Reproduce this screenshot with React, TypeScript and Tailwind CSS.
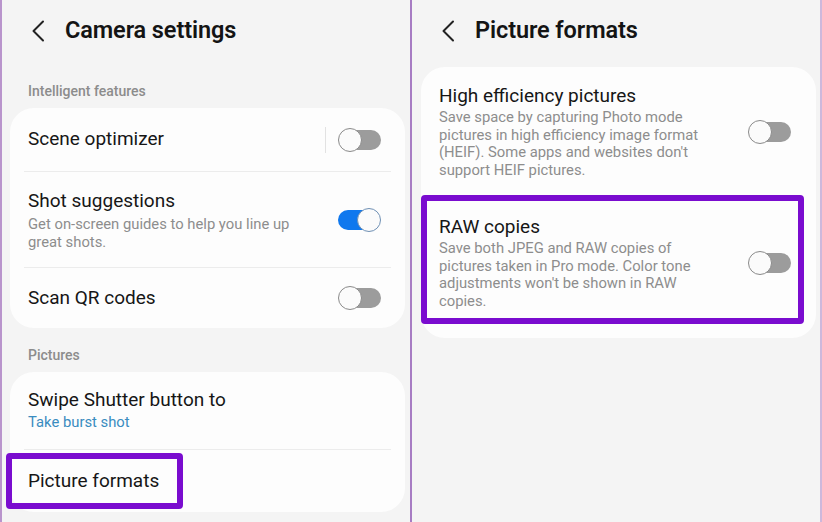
import React from "react";

function Chevron() {
  return (
    <svg width="14" height="22" viewBox="0 0 14 22" fill="none">
      <path d="M12 1.5 L2.5 11 L12 20.5" stroke="#222" strokeWidth="2" strokeLinecap="round" strokeLinejoin="round" />
    </svg>
  );
}

function Toggle({ on }: { on?: boolean }) {
  if (on) {
    return (
      <div className="relative w-[43px] h-[24px] shrink-0">
        <div className="absolute left-0 right-[2px] top-[2px] h-[20px] rounded-full bg-[#0f78ee]" />
        <div className="absolute right-0 top-0 w-[24px] h-[24px] rounded-full bg-[#fbfbfb] border-[1.5px] border-[#6f90b4]" />
      </div>
    );
  }
  return (
    <div className="relative w-[43px] h-[24px] shrink-0">
      <div className="absolute left-[2px] right-0 top-[2px] h-[20px] rounded-full bg-[#9c9c9c]" />
      <div className="absolute left-0 top-0 w-[24px] h-[24px] rounded-full bg-[#fbfbfb] border-[1.5px] border-[#8a8a8a]" />
    </div>
  );
}

const Divider = () => <div className="mx-[14px] h-px bg-[#ececec]" />;

function Lines({ lines }: { lines: string[] }) {
  return (
    <div className="mt-[1px] text-[14.8px] leading-[17.7px] text-[#8d8d8d] whitespace-nowrap">
      {lines.map((l, i) => (
        <div key={i}>{l}</div>
      ))}
    </div>
  );
}

export default function App() {
  return (
    <div
      className="w-[822px] h-[522px] flex bg-[#f4f4f4] overflow-hidden"
      style={{ fontFamily: "Roboto, 'Noto Sans', sans-serif" }}
    >
      <div className="w-[2px] bg-[#b994cc] shrink-0" />
      {/* Left panel */}
      <div className="w-[408px] shrink-0 flex flex-col">
        <div className="h-[62px] flex items-center pl-[29px]">
          <Chevron />
          <div className="ml-[20px] text-[23.5px] font-semibold text-[#141414] tracking-[-0.1px]">Camera settings</div>
        </div>
        <div className="pl-[26px] pt-[20px] mb-[8px] h-[38px] text-[14px] leading-[18px] font-medium text-[#8c8c8c]">Intelligent features</div>
        <div className="ml-[8px] mr-[5px] rounded-[24px] bg-[#fdfdfd]">
          <div className="h-[63px] flex items-center pl-[18px] pr-[24px]">
            <div className="flex-1 text-[19px] text-[#161616]">Scene optimizer</div>
            <div className="w-px h-[26px] bg-[#e2e2e2] mr-[12px]" />
            <Toggle />
          </div>
          <Divider />
          <div className="h-[95px] flex items-center pl-[18px] pr-[24px]">
            <div className="flex-1">
              <div className="text-[19px] leading-[24px] text-[#161616]">Shot suggestions</div>
              <div className="mt-[2px] text-[14.8px] leading-[18px] text-[#8d8d8d] whitespace-nowrap">
                <div>Get on-screen guides to help you line up</div>
                <div>great shots.</div>
              </div>
            </div>
            <Toggle on />
          </div>
          <Divider />
          <div className="h-[60px] flex items-center pl-[18px] pr-[24px]">
            <div className="flex-1 text-[19px] text-[#161616]">Scan QR codes</div>
            <Toggle />
          </div>
        </div>
        <div className="pl-[26px] pt-[18px] mb-[8px] h-[36px] text-[14px] leading-[18px] font-medium text-[#8c8c8c]">Pictures</div>
        <div className="ml-[8px] mr-[5px] rounded-[24px] bg-[#fdfdfd] h-[140px]">
          <div className="h-[77px] pl-[18px] pt-[16px]">
            <div className="text-[19px] leading-[24px] text-[#161616]">Swipe Shutter button to</div>
            <div className="mt-[1px] text-[14.8px] leading-[18px] text-[#3a8cc0]">Take burst shot</div>
          </div>
          <Divider />
          <div className="relative h-[62px] flex items-center pl-[18px]">
            <div className="text-[19px] text-[#161616]">Picture formats</div>
            <div className="absolute left-[-4px] top-[3px] w-[177px] h-[56px] border-[6px] border-[#7a0ccf] rounded-[4px]" />
          </div>
        </div>
      </div>
      <div className="w-[2px] bg-[#a77cc3] shrink-0" />
      {/* Right panel */}
      <div className="w-[408px] shrink-0 flex flex-col">
        <div className="h-[62px] flex items-center pl-[29px]">
          <Chevron />
          <div className="ml-[20px] text-[23.5px] font-semibold text-[#141414] tracking-[-0.1px]">Picture formats</div>
        </div>
        <div className="mt-[5px] ml-[9px] mr-[4px] rounded-[24px] bg-[#fdfdfd] pb-[14px]">
          <div className="flex items-center pl-[18px] pr-[25px] pt-[17px] pb-[15px]">
            <div className="flex-1">
              <div className="text-[19px] leading-[24px] text-[#161616]">High efficiency pictures</div>
              <Lines
                lines={[
                  "Save space by capturing Photo mode",
                  "pictures in high efficiency image format",
                  "(HEIF). Some apps and websites don't",
                  "support HEIF pictures.",
                ]}
              />
            </div>
            <Toggle />
          </div>
          <div className="relative flex items-center pl-[18px] pr-[25px] pt-[20px] pb-[13px]">
            <div className="flex-1">
              <div className="text-[19px] leading-[24px] text-[#161616]">RAW copies</div>
              <Lines
                lines={[
                  "Save both JPEG and RAW copies of",
                  "pictures taken in Pro mode. Color tone",
                  "adjustments won't be shown in RAW",
                  "copies.",
                ]}
              />
            </div>
            <Toggle />
            <div className="absolute left-0 right-[12px] top-0 bottom-0 border-[6px] border-[#7a0ccf] rounded-[4px]" />
          </div>
        </div>
      </div>
      <div className="w-[2px] bg-[#cdb8dc] shrink-0" />
    </div>
  );
}
